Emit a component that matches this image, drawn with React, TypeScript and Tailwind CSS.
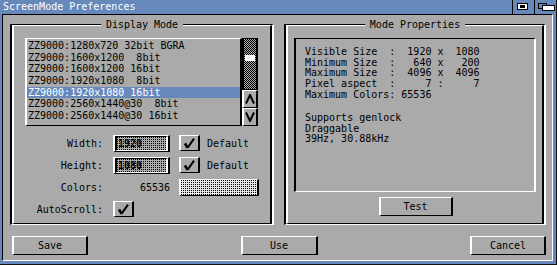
import React from "react";

const FONT = "font-['DejaVu_Sans_Mono','Liberation_Mono',monospace] text-[10px]";
const RAISED =
  "border-t border-l-2 border-b border-r-2 border-t-white border-l-white border-b-black border-r-black";
const RECESSED =
  "border-t border-l-2 border-b border-r-2 border-t-black border-l-black border-b-white border-r-white";
const DOTS_GRAY =
  "bg-[#aaaaaa] bg-[conic-gradient(at_1px_1px,transparent_75%,#000_0)] bg-[length:2px_2px]";
const DOTS_WHITE =
  "bg-[#e8e8e8] bg-[conic-gradient(at_1px_1px,transparent_75%,#000_0)] bg-[length:2px_2px]";
const CHECKER =
  "bg-[conic-gradient(#000_25%,#aaaaaa_0_50%,#000_0_75%,#aaaaaa_0)] bg-[length:2px_2px]";

const modes = [
  "ZZ9000:1280x720 32bit BGRA",
  "ZZ9000:1600x1200  8bit",
  "ZZ9000:1600x1200 16bit",
  "ZZ9000:1920x1080  8bit",
  "ZZ9000:1920x1080 16bit",
  "ZZ9000:2560x1440@30  8bit",
  "ZZ9000:2560x1440@30 16bit",
];

function Group({
  title,
  className,
  children,
}: {
  title: string;
  className: string;
  children: React.ReactNode;
}) {
  return (
    <div className={`relative ${RECESSED} ${className}`}>
      <div className={`h-full ${RAISED} flex flex-col`}>{children}</div>
      <div className="absolute inset-x-0 top-[-6px] flex justify-center">
        <span className="bg-[#aaaaaa] px-[5px] leading-[11px]">{title}</span>
      </div>
    </div>
  );
}

function Button({ label, className }: { label: string; className: string }) {
  return (
    <div
      className={`h-[19px] ${RAISED} flex items-center justify-center leading-[17px] ${className}`}
    >
      {label}
    </div>
  );
}

function Check() {
  return (
    <svg width="11" height="11" viewBox="0 0 11 11">
      <path d="M1 5.5 L3.6 9.8" stroke="#000" strokeWidth="2.6" fill="none" />
      <path d="M3.6 9.8 L10 0.6" stroke="#000" strokeWidth="2" fill="none" />
    </svg>
  );
}

function CheckBox({ className }: { className: string }) {
  return (
    <div className={`w-[21px] h-[16px] ${RAISED} flex items-center justify-center ${className}`}>
      <Check />
    </div>
  );
}

function StringField({ value }: { value: string }) {
  return (
    <div className={`w-[57px] h-[17px] ${RAISED}`}>
      <div className={`h-full ${RECESSED} ${DOTS_GRAY} pl-[1px] leading-[13px] font-bold`}>
        {value}
      </div>
    </div>
  );
}

export default function App() {
  return (
    <div
      className={`w-[557px] h-[265px] bg-[#6688bb] border-r border-b border-[#111111] flex flex-col overflow-hidden text-black ${FONT}`}
    >
      {/* Title bar */}
      <div className="h-[14px] shrink-0 flex">
        <div className="flex-1 pl-[3px] leading-[14px] text-white whitespace-pre">
          ScreenMode Preferences
        </div>
        <div className="w-[22px] border-l border-black flex items-center justify-center">
          <svg width="21" height="14" viewBox="0 0 21 14">
            <rect x="4.5" y="3.5" width="10" height="6" fill="#ffffff" stroke="#000" />
            <rect x="7" y="5" width="5" height="3" fill="#000" />
          </svg>
        </div>
        <div className="w-[22px] border-l border-black flex items-center justify-center">
          <svg width="21" height="14" viewBox="0 0 21 14">
            <rect x="3.5" y="3.5" width="8" height="5" fill="none" stroke="#000" />
            <rect x="7.5" y="5.5" width="12" height="5" fill="#ffffff" stroke="#000" />
          </svg>
        </div>
      </div>

      {/* Window body */}
      <div className="flex-1 ml-[2px] mr-[3px] mb-[3px] border border-t-black border-l-black border-b-white border-r-white bg-[#aaaaaa] flex flex-col pt-[9px] pl-[7px] pr-[6px]">
        <div className="flex gap-[10px] h-[201px]">
          {/* Display Mode */}
          <Group title="Display Mode" className="w-[264px]">
            <div className="ml-[11px] mt-[12px] flex h-[88px]">
              <div className={`w-[217px] ${RAISED} pt-[1px]`}>
                {modes.map((m, i) => (
                  <div
                    key={m}
                    className={`h-[11.67px] leading-[11.67px] pl-[1px] whitespace-pre ${
                      i === 4 ? "bg-[#6688bb] text-white" : ""
                    }`}
                  >
                    {m}
                  </div>
                ))}
              </div>
              <div className="w-[16px] flex flex-col">
                <div className={`h-[52px] border-t border-b border-l-2 border-r-2 border-black ${CHECKER}`}>
                  <div className="mt-[16px] mx-[1px] h-[6px] bg-white" />
                </div>
                <div className={`h-[18px] ${RAISED} flex items-center justify-center`}>
                  <svg width="10" height="10" viewBox="0 0 10 10">
                    <path d="M1 9.5 L5 1 L9 9.5" stroke="#000" strokeWidth="2" fill="none" />
                  </svg>
                </div>
                <div className={`h-[18px] ${RAISED} flex items-center justify-center`}>
                  <svg width="10" height="10" viewBox="0 0 10 10">
                    <path d="M1 0.5 L5 9 L9 0.5" stroke="#000" strokeWidth="2" fill="none" />
                  </svg>
                </div>
              </div>
            </div>

            <div className="mt-[9px] flex flex-col gap-[5px]">
              <div className="flex h-[17px]">
                <div className="w-[89px] text-right leading-[17px]">Width:</div>
                <div className="ml-[10px]">
                  <StringField value="1920" />
                </div>
                <CheckBox className="ml-[9px]" />
                <div className="ml-[7px] leading-[17px]">Default</div>
              </div>
              <div className="flex h-[17px]">
                <div className="w-[89px] text-right leading-[17px]">Height:</div>
                <div className="ml-[10px]">
                  <StringField value="1080" />
                </div>
                <CheckBox className="ml-[9px]" />
                <div className="ml-[7px] leading-[17px]">Default</div>
              </div>
              <div className="flex h-[17px]">
                <div className="w-[89px] text-right leading-[17px]">Colors:</div>
                <div className="ml-[10px] w-[57px] text-right leading-[17px]">65536</div>
                <div className={`ml-[9px] w-[80px] h-[17px] ${RAISED}`}>
                  <div className={`h-full ${DOTS_WHITE}`} />
                </div>
              </div>
              <div className="flex h-[17px]">
                <div className="w-[89px] text-right leading-[17px]">AutoScroll:</div>
                <CheckBox className="ml-[10px]" />
              </div>
            </div>
          </Group>

          {/* Mode Properties */}
          <Group title="Mode Properties" className="w-[262px]">
            <div
              className={`mx-[6px] mt-[12px] h-[154px] ${RECESSED} pl-[9px] pt-[8px] leading-[10.7px] whitespace-pre`}
            >
              <div>Visible Size  :  1920 x  1080</div>
              <div>Minimum Size  :   640 x   200</div>
              <div>Maximum Size  :  4096 x  4096</div>
              <div>Pixel aspect  :     7 :     7</div>
              <div>Maximum Colors: 65536</div>
              <div className="h-[12.5px]" />
              <div>Supports genlock</div>
              <div>Draggable</div>
              <div>39Hz, 30.88kHz</div>
            </div>
            <div className="flex justify-center mt-[5px] pl-[1px]">
              <Button label="Test" className="w-[74px]" />
            </div>
          </Group>
        </div>

        <div className="flex justify-between mt-[11px] pl-[2px]">
          <Button label="Save" className="w-[76px]" />
          <Button label="Use" className="w-[77px]" />
          <Button label="Cancel" className="w-[76px]" />
        </div>
      </div>
    </div>
  );
}
